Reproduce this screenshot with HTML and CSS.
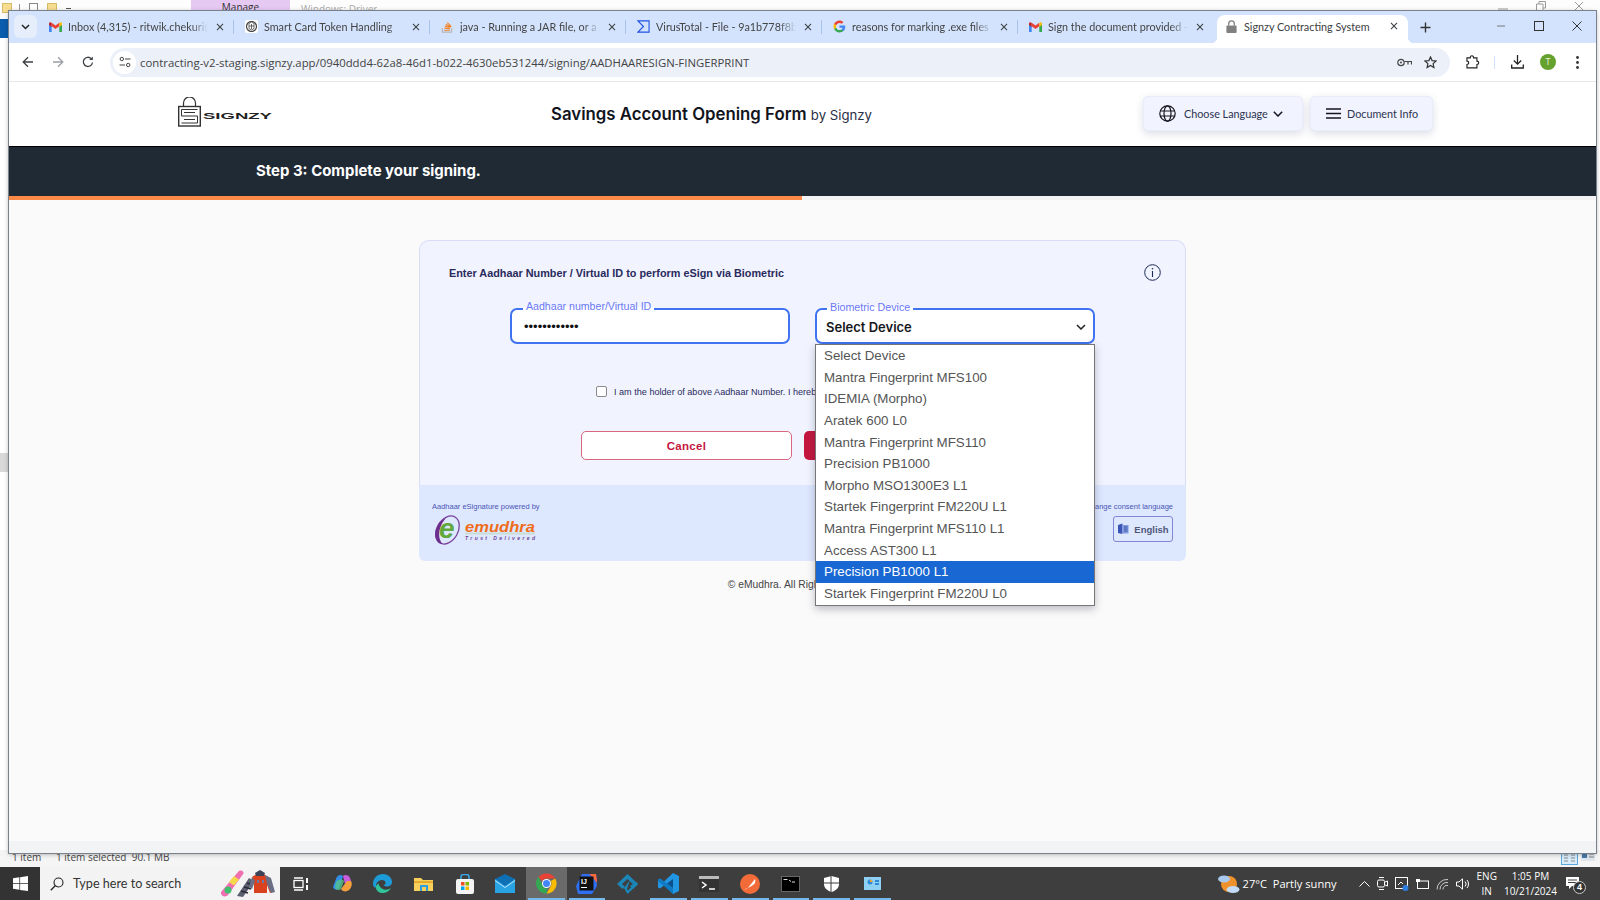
FILE: index.html
```html
<!DOCTYPE html>
<html lang="en">
<head>
<meta charset="utf-8">
<title>Signzy Contracting System</title>
<link rel="stylesheet" href="styles.css">
</head>
<body>
<svg class="defs" width="0" height="0" aria-hidden="true">
  <symbol id="gmail" viewBox="0 0 24 18">
    <path fill="#4285f4" d="M0 18V4l5 3.5V18z"/><path fill="#34a853" d="M24 18V4l-5 3.5V18z"/>
    <path fill="#ea4335" d="M5 7.5 12 12.5l7-5V1l-7 5.2L5 1z"/>
    <path fill="#c5221f" d="M0 3v2.500L5 9V1.500L3.500.5C1.800-.5 0 .8 0 3z"/>
    <path fill="#fbbc04" d="M24 3v2.500L19 9V1.500l1.500-1C22.200-.5 24 .8 24 3z"/>
  </symbol>
  <symbol id="close" viewBox="0 0 10 10"><path d="M1.200 1.200l7.600 7.600M8.800 1.200 1.200 8.800" stroke="#3c4043" stroke-width="1.300" fill="none"/></symbol>
</svg>

<div class="desktop">
  <div class="explorer">
    <div class="ribbon">
      <span class="qa-folder"></span><span class="qa-sep"></span><span class="qa-doc"></span><span class="qa-folder"></span><span class="qa-dash"></span>
      <span class="manage">Manage</span><span class="ribbon-title">Windows: Driver</span>
      <span class="behind-controls">
        <svg width="10" height="10" viewBox="0 0 10 10"><path d="M0 8h10" stroke="#9a9a9a"/></svg>
        <svg width="10" height="10" viewBox="0 0 10 10"><path d="M.5 3h6.500v6.500H.5zM3 3V.5h6.500V7H7" stroke="#9a9a9a" fill="none"/></svg>
        <svg width="10" height="10" viewBox="0 0 10 10"><path d="M1 1l8 8M9 1 1 9" stroke="#9a9a9a"/></svg>
      </span>
    </div>
    <div class="explorer-mid">
      <div class="explorer-blue"></div>
      <div class="explorer-scroll"></div>
    </div>
    <div class="statusbar">
      <span class="st-a">1 item</span><span class="st-b">1 item selected&nbsp; 90.1 MB</span>
      <span class="st-views">
        <svg width="17" height="14" viewBox="0 0 17 14"><rect x=".5" y=".5" width="16" height="13" fill="#d8ecfa" stroke="#5aa9dd"/><path d="M3 4h4M10 4h4M3 7h4M10 7h4M3 10h4M10 10h4" stroke="#8a8a8a"/></svg>
        <svg width="14" height="10" viewBox="0 0 14 10"><rect width="14" height="10" fill="#dfe6ee"/><rect x="1" y="2" width="5" height="5" fill="#4a7aa8"/><path d="M8 3h5M8 6h5" stroke="#888"/></svg>
      </span>
    </div>
  </div>

  <div class="taskbar">
    <div class="start">
      <svg width="15" height="15" viewBox="0 0 16 16"><path fill="#fff" d="M0 2.300 6.800 1.300v6.200H0zM7.600 1.200 16 0v7.500H7.600zM0 8.300h6.800v6.300L0 13.700zM7.600 8.300H16V16l-8.400-1.200z"/></svg>
    </div>
    <div class="search">
      <svg width="14" height="14" viewBox="0 0 14 14"><circle cx="8.500" cy="5.500" r="4.500" fill="none" stroke="#222" stroke-width="1.100"/><path d="M5.200 8.800.8 13.200" stroke="#222" stroke-width="1.300"/></svg>
      <span class="search-text">Type here to search</span>
      <svg class="search-art" width="54" height="29" viewBox="0 0 54 29">
        <path d="M0 23 17 3c2-2.500 6-1.500 5.500 1.500L7 26c-2.500 3-8 1-7-3z" fill="#f06fb0"/>
        <path d="M8 13l5-6 5 3.500-5 6z" fill="#f5d94a"/><circle cx="7" cy="21" r="3.500" fill="#3fbf6f"/>
        <path d="M16 27 28 9l5 3-11 16z" fill="#5a5f70"/><path d="M20 22l7 2M23 18l7 2M26 14l6 2" stroke="#2a2c35" stroke-width="1.500"/>
        <path d="M31 8c3-3 9-4 13-2l5 3 3 14-3 1-3-8v8H33V14z" fill="#d9411f"/><path d="M44 6l6 3 4 14-4 1-4-9zM31 8l-3 10 3 2 3-8z" fill="#6a6f86"/>
        <path d="M34 4l5-3 5 3-1 3h-8z" fill="#3d4258"/><rect x="36" y="11" width="2" height="3" fill="#6d7aa8"/><rect x="41" y="11" width="2" height="3" fill="#6d7aa8"/>
      </svg>
    </div>
    <div class="apps">
      <div class="app"><svg width="16" height="14" viewBox="0 0 16 14"><rect x="1" y="3.500" width="9" height="7" fill="none" stroke="#fff" stroke-width="1.300"/><path d="M1 1h9M1 13h9" stroke="#fff" stroke-width="1.300"/><path d="M13 1h2v5h-2zM13 8h2v5h-2z" fill="#fff"/></svg></div>
      <div class="app"><svg width="21" height="21" viewBox="0 0 21 21"><path d="M4 6c1-4 5-5 7-3l-4 12c-2 3-5 2-6-1z" fill="#2f8fe8"/><path d="M11 3c2-2 6-1 7 2l1 3-6 3z" fill="#c95cdc"/><path d="M19 8c2 3 0 9-4 10-2 1-5 0-6-2l6-8z" fill="#f4a13d"/><path d="M4 9c3-3 6-3 8-1l-3 8c-2 2-6 1-6-2z" fill="#58c38a" opacity=".8"/></svg></div>
      <div class="app"><svg width="21" height="21" viewBox="0 0 21 21"><path d="M1 11C1 5 5.500 1 11 1c5.500 0 9 4 9 8 0 3-2.500 4.500-5 4.500-2 0-3.500-.8-3.500-1.500 3 .5 3-5-1.500-5-3.500 0-6.500 3-6 7.500C2.500 15 1 13 1 11z" fill="#1c9bd8"/><path d="M3.800 14.500c.5 3.500 4 6 7.700 5.500 3-.3 6-2 7.500-5-2 1.500-5 2-7 1.500-3.500-1-5-4-5.500-6-1.500 1-2.700 2-2.700 4z" fill="#2fc49a"/></svg></div>
      <div class="app"><svg width="19" height="16" viewBox="0 0 19 16"><path d="M0 2h7l2 2h10v11H0z" fill="#f8cf5c"/><path d="M0 5h19v2H0z" fill="#e5a92c"/><rect x="6" y="9" width="8" height="6" fill="#2d9fe0"/><rect x="8" y="11" width="4" height="4" fill="#f8cf5c"/></svg></div>
      <div class="app"><svg width="20" height="20" viewBox="0 0 20 20"><path d="M6 5V3c0-1.500 1-2.500 2-2.500h4c1 0 2 1 2 2.500v2" fill="none" stroke="#38a9e6" stroke-width="1.500"/><rect x="1" y="5" width="18" height="15" rx="2" fill="#f4f4f4"/><rect x="6" y="8" width="3.500" height="3.500" fill="#f25022"/><rect x="10.500" y="8" width="3.500" height="3.500" fill="#7fba00"/><rect x="6" y="12.500" width="3.500" height="3.500" fill="#00a4ef"/><rect x="10.500" y="12.500" width="3.500" height="3.500" fill="#ffb900"/></svg></div>
      <div class="app"><svg width="20" height="19" viewBox="0 0 20 19"><rect y="5" width="20" height="14" fill="#29a3e4"/><path d="M0 5 10 0l10 5-10 7z" fill="#0f6fb5"/><path d="M0 6l10 7 10-7v1L10 14 0 7z" fill="#bfe4f7"/></svg></div>
      <div class="app running active"><svg width="21" height="21" viewBox="0 0 21 21"><path d="M10.500.5a10 10 0 0 1 8.700 5H10.500a5 5 0 0 0-4.400 2.500L2.500 4A10 10 0 0 1 10.500.5z" fill="#ea4335"/><path d="M19.200 5.500a10 10 0 0 1-8.700 15l4.300-7.500a5 5 0 0 0 0-5z" fill="#fbbc04"/><path d="M10.500 20.500A10 10 0 0 1 2.500 4L6.800 13a5 5 0 0 0 4.300 2.500z" fill="#34a853"/><circle cx="10.500" cy="10.500" r="4.500" fill="#fff"/><circle cx="10.500" cy="10.500" r="3.500" fill="#4285f4"/></svg></div>
      <div class="app running"><svg width="21" height="21" viewBox="0 0 21 21"><path d="M0 13 6 1h14l1 12-5 8H2z" fill="#2f6ff0"/><path d="M6 1h14l1 8-8-8z" fill="#e23c8c"/><path d="M14 1h6l1 9z" fill="#f36b3b"/><rect x="3.500" y="3.500" width="14" height="14" fill="#111"/><text x="5" y="10.500" class="ij">IJ</text><rect x="5" y="14" width="6" height="1" fill="#fff"/></svg></div>
      <div class="app"><svg width="21" height="20" viewBox="0 0 21 20"><path d="M10.500 0 21 10 16 15l-3-3 3-2-5.500-5L5 10l3 3-2.500 2L0 10z" fill="#1b86b8"/><path d="M13 6l-6 8 3.500 6L21 10l-2-2-8 8.500-1-1.500z" fill="#1b86b8"/></svg></div>
      <div class="app running"><svg width="21" height="21" viewBox="0 0 21 21"><path d="M15 0 21 3v15l-6 3L6 12.500 2 15.500 0 14.500V6.500l2-1 4 3z" fill="#2196e3"/><path d="M15 6v9l-6-4.500z" fill="#0d4f8b"/><path d="M0 6.500 2 5.500 15 15v6L0 8z" fill="#0a6fb8" opacity=".75"/></svg></div>
      <div class="app running"><svg width="20" height="16" viewBox="0 0 20 16"><rect width="20" height="16" fill="#333"/><rect width="20" height="3" fill="#bbb"/><path d="M3 6l4 3-4 3" fill="none" stroke="#fff" stroke-width="1.500"/><path d="M10 13h6" stroke="#fff" stroke-width="1.500"/></svg></div>
      <div class="app running"><svg width="20" height="20" viewBox="0 0 20 20"><circle cx="10" cy="10" r="10" fill="#f26b38"/><path d="M4 16c3-1 5-3 7-6l4-5c1 2 0 5-2 6l-3 2-3 1z" fill="#fff"/></svg></div>
      <div class="app running"><svg width="19" height="16" viewBox="0 0 19 16"><rect x=".5" y=".5" width="18" height="15" fill="#000" stroke="#666"/><path d="M2.500 3.500h4M8 4l2 1.500M11 6h3" stroke="#ddd"/></svg></div>
      <div class="app running"><svg width="15" height="16" viewBox="0 0 15 16"><path d="M7.500 0 15 2v6c0 4-3 6.500-7.500 8C3 14.500 0 12 0 8V2z" fill="#fff"/><path d="M7 0v16M0 7h15" stroke="#3c3c3c" stroke-width="1"/></svg></div>
      <div class="app running"><svg width="17" height="13" viewBox="0 0 17 13"><rect width="17" height="13" fill="#8fd0f5"/><circle cx="6" cy="5" r="2.500" fill="#2f8ad8"/><path d="M6 2.500A2.500 2.500 0 0 1 8.500 5H6z" fill="#f3a73a"/><path d="M11 3h4v2h-4zM11 6h4v2h-4z" fill="#2f8ad8"/></svg></div>
    </div>
    <div class="tray">
      <svg class="weather" width="22" height="20" viewBox="0 0 22 20"><circle cx="11" cy="10" r="8" fill="#f0922b"/><ellipse cx="6" cy="5" rx="6" ry="3.500" fill="#a9c8ee"/><ellipse cx="15" cy="15.500" rx="6.500" ry="3.500" fill="#c4daf5"/></svg>
      <span class="temp">27°C&nbsp; Partly sunny</span>
      <span class="tray-icons">
        <svg width="11" height="7" viewBox="0 0 11 7"><path d="M.5 6.500l5-5 5 5" fill="none" stroke="#fff"/></svg>
        <svg width="11" height="15" viewBox="0 0 11 15"><rect x=".5" y="4" width="7" height="7" rx="1.500" fill="none" stroke="#fff"/><path d="M8 6l2.500-1v5L8 9M2 1.500h5M2 13.500h5" stroke="#fff" fill="none"/></svg>
        <svg width="14" height="14" viewBox="0 0 14 14"><rect x=".5" y=".5" width="12" height="11" fill="none" stroke="#fff"/><path d="M3 8l3-3 2 2" stroke="#fff" fill="none"/><circle cx="10.500" cy="11" r="3" fill="#2f7fe0"/></svg>
        <svg width="13" height="10" viewBox="0 0 13 10"><rect x="1.500" y="2" width="11" height="7.500" fill="none" stroke="#fff"/><rect y="0" width="4" height="3" fill="#fff"/></svg>
        <svg width="13" height="12" viewBox="0 0 13 12"><path d="M1 11.500a10 10 0 0 1 11-10M4 11.500a7 7 0 0 1 8-7M7 11.500a4 4 0 0 1 5-4" fill="none" stroke="#ccc"/></svg>
        <svg width="14" height="12" viewBox="0 0 14 12"><path d="M.5 4h2.500L6.500.8v10.400L3 8H.5z" fill="none" stroke="#fff"/><path d="M9 3.500a3.500 3.500 0 0 1 0 5M11 2a6 6 0 0 1 0 8" fill="none" stroke="#fff"/></svg>
      </span>
      <span class="lang"><span>ENG</span><span>IN</span></span>
      <span class="clock"><span>1:05 PM</span><span>10/21/2024</span></span>
      <span class="notif">
        <svg width="13" height="13" viewBox="0 0 13 13"><path d="M0 0h13v9H6l-3 3V9H0z" fill="#fff"/><path d="M2 3h9M2 5.500h9" stroke="#3d3d3d"/></svg>
        <span class="notif-badge">4</span>
      </span>
    </div>
  </div>
</div>

<div class="window">
  <div class="tabstrip">
    <button class="tab-list"><svg width="9" height="6" viewBox="0 0 9 6"><path d="M1 1l3.500 3.500L8 1" fill="none" stroke="#222" stroke-width="1.500"/></svg></button>
    <div class="tab sep"><svg class="fav fav-gm"><use href="#gmail"/></svg><span class="tab-title">Inbox (4,315) - ritwik.chekuri@signzy.tech</span><svg class="tab-x"><use href="#close"/></svg></div>
    <div class="tab sep"><span class="fav fav-ai"><svg width="11" height="11" viewBox="0 0 11 11"><circle cx="5.500" cy="5.500" r="5" fill="none" stroke="#444" stroke-width="1.200"/><path d="M3 2.500v5l2.500 1.500L8 7.500v-5L5.500 1zM3 5h5M5.500 3v5" fill="none" stroke="#444" stroke-width=".8"/></svg></span><span class="tab-title">Smart Card Token Handling</span><svg class="tab-x"><use href="#close"/></svg></div>
    <div class="tab sep"><svg class="fav" viewBox="0 0 14 14"><path d="M1.500 8.500v4.500h10V8.500" fill="none" stroke="#b6b6b6" stroke-width="1.200"/><path d="M3.500 11h6M3.700 8.800l6 .6M4.200 6.600l5.800 1.500M5.200 4.600l5.200 3M6.800 2.800l4.300 4.300" stroke="#f48024" stroke-width="1.200"/></svg><span class="tab-title">java - Running a JAR file, or a JAR file on the system</span><svg class="tab-x"><use href="#close"/></svg></div>
    <div class="tab sep"><svg class="fav" viewBox="0 0 14 14"><path d="M1 1h12v12H1l6-6z" fill="none" stroke="#2050e0" stroke-width="1.200"/></svg><span class="tab-title">VirusTotal - File - 9a1b778f8b0c3d2e1f</span><svg class="tab-x"><use href="#close"/></svg></div>
    <div class="tab sep"><svg class="fav" viewBox="0 0 24 24"><path fill="#4285f4" d="M22.560 12.250c0-.78-.07-1.530-.2-2.250H12v4.260h5.920c-.26 1.370-1.040 2.530-2.210 3.310v2.770h3.570c2.080-1.920 3.280-4.740 3.280-8.090z"/><path fill="#34a853" d="M12 23c2.970 0 5.460-.98 7.280-2.660l-3.570-2.770c-.98.66-2.230 1.060-3.710 1.060-2.860 0-5.290-1.930-6.160-4.530H2.180v2.840C3.990 20.530 7.700 23 12 23z"/><path fill="#fbbc05" d="M5.840 14.090c-.22-.66-.35-1.360-.35-2.090s.13-1.430.35-2.090V7.070H2.180C1.430 8.550 1 10.220 1 12s.43 3.450 1.180 4.930l3.660-2.840z"/><path fill="#ea4335" d="M12 5.380c1.620 0 3.060.56 4.210 1.640l3.150-3.150C17.450 2.090 14.970 1 12 1 7.700 1 3.990 3.470 2.180 7.070l3.660 2.840c.87-2.600 3.300-4.530 6.160-4.530z"/></svg><span class="tab-title">reasons for marking .exe files as unsafe</span><svg class="tab-x"><use href="#close"/></svg></div>
    <div class="tab"><svg class="fav fav-gm"><use href="#gmail"/></svg><span class="tab-title">Sign the document provided - the signer</span><svg class="tab-x"><use href="#close"/></svg></div>
    <div class="tab tab-active"><svg class="fav" viewBox="0 0 14 14"><path d="M4 6V4a3 3 0 0 1 6 0v2" fill="none" stroke="#808080" stroke-width="1.400"/><rect x="1.500" y="6" width="11" height="8" rx="1" fill="#808080"/></svg><span class="tab-title tab-title-full">Signzy Contracting System</span><svg class="tab-x"><use href="#close"/></svg></div>
    <button class="tab-new"><svg width="11" height="11" viewBox="0 0 11 11"><path d="M5.500.5v10M.5 5.500h10" stroke="#333" stroke-width="1.400"/></svg></button>
    <div class="win-controls">
      <svg width="10" height="10" viewBox="0 0 10 10"><path d="M1 5h8" stroke="#777"/></svg>
      <svg width="10" height="10" viewBox="0 0 10 10"><rect x=".5" y=".5" width="9" height="9" fill="none" stroke="#333"/></svg>
      <svg width="10" height="10" viewBox="0 0 10 10"><path d="M.5.5l9 9M9.500.5l-9 9" stroke="#333"/></svg>
    </div>
  </div>

  <div class="toolbar">
    <button class="nav"><svg width="12" height="12" viewBox="0 0 12 12"><path d="M11 6H1.500M6 1.200 1.200 6 6 10.800" fill="none" stroke="#3c4043" stroke-width="1.300"/></svg></button>
    <button class="nav"><svg width="12" height="12" viewBox="0 0 12 12"><path d="M1 6h9.500M6 1.200 10.800 6 6 10.800" fill="none" stroke="#9aa0a6" stroke-width="1.300"/></svg></button>
    <button class="nav"><svg width="12" height="12" viewBox="0 0 12 12"><path d="M10.500 6.500A4.600 4.600 0 1 1 9.200 2.600" fill="none" stroke="#3c4043" stroke-width="1.300"/><path d="M10.800.5v3.600H7.200z" fill="#3c4043"/></svg></button>
    <div class="omnibox">
      <span class="site-icon"><svg width="12" height="12" viewBox="0 0 12 12"><circle cx="2.800" cy="3" r="1.700" fill="none" stroke="#444"/><path d="M6 3h5.500M.5 9H6" stroke="#444"/><circle cx="9.200" cy="9" r="1.700" fill="none" stroke="#444"/></svg></span>
      <span class="url">contracting-v2-staging.signzy.app/0940ddd4-62a8-46d1-b022-4630eb531244/signing/AADHAARESIGN-FINGERPRINT</span>
      <svg class="omni-key" width="15" height="9" viewBox="0 0 15 9"><circle cx="4" cy="4.500" r="3.200" fill="none" stroke="#444" stroke-width="1.200"/><circle cx="4" cy="4.500" r="1" fill="#444"/><path d="M7.500 3.500H14.500V6.500M11 4v2.500" fill="none" stroke="#444" stroke-width="1.200"/></svg>
      <svg class="omni-star" width="13" height="13" viewBox="0 0 13 13"><path d="M6.500 1l1.600 3.600 3.900.4-2.900 2.600.8 3.900-3.400-2-3.400 2 .8-3.900L1 5l3.900-.4z" fill="none" stroke="#333" stroke-width="1.200"/></svg>
    </div>
    <svg class="tool-puzzle" width="14" height="14" viewBox="0 0 14 14"><path d="M1 3h3.500c0-3 3.500-3 3.500 0h3.500v3.500c2.500 0 2.500 3.500 0 3.500V13.500H1V10c2.500 0 2.500-3.500 0-3.500z" fill="none" stroke="#222" stroke-width="1.200" transform="scale(.95)"/></svg>
    <span class="tool-sep"></span>
    <svg class="tool-dl" width="13" height="14" viewBox="0 0 13 14"><path d="M6.500 0v9M2.800 5.500l3.700 3.700 3.700-3.700M.7 9.500v3.500h11.600V9.500" fill="none" stroke="#222" stroke-width="1.300"/></svg>
    <span class="avatar">T</span>
    <svg class="tool-dots" width="3" height="13" viewBox="0 0 3 13"><circle cx="1.500" cy="1.500" r="1.400" fill="#333"/><circle cx="1.500" cy="6.500" r="1.400" fill="#333"/><circle cx="1.500" cy="11.500" r="1.400" fill="#333"/></svg>
  </div>

  <div class="page">
    <header class="header">
      <svg class="logo" width="94" height="30" viewBox="0 0 94 30">
        <path d="M5.500 9V6a6 6 0 0 1 12 0v3" fill="none" stroke="#333" stroke-width="1.200"/>
        <rect x=".7" y="9.500" width="21.600" height="19.500" fill="none" stroke="#333" stroke-width="1.400"/>
        <path d="M19.500 12.500H3.500v6.500h16v7H3.500M6 15.500h11M6 22.500h11" fill="none" stroke="#333" stroke-width="1"/>
        <text x="25" y="22" class="logo-text" textLength="69" lengthAdjust="spacingAndGlyphs">SIGNZY</text>
      </svg>
      <h1 class="doc-title">Savings Account Opening Form <span class="doc-by">by Signzy</span></h1>
      <div class="header-actions">
        <button class="hbtn hbtn-lang">
          <svg width="17" height="17" viewBox="0 0 17 17"><g fill="none" stroke="#14141e" stroke-width="1.200"><circle cx="8.500" cy="8.500" r="7.700"/><ellipse cx="8.500" cy="8.500" rx="3.500" ry="7.700"/><path d="M1.200 6h14.600M1.200 11h14.600"/></g></svg>
          <span>Choose Language</span>
          <svg class="hbtn-caret" width="10" height="6" viewBox="0 0 10 6"><path d="M.8.800 5 5 9.200.8" fill="none" stroke="#14141e" stroke-width="1.500"/></svg>
        </button>
        <button class="hbtn hbtn-doc">
          <svg width="15" height="11" viewBox="0 0 15 11"><path d="M0 1h15M0 5.500h15M0 10h15" stroke="#14141e" stroke-width="1.300"/></svg>
          <span>Document Info</span>
        </button>
      </div>
    </header>
    <div class="stepbar"><span>Step 3: Complete your signing.</span></div>
    <div class="progress"><div class="progress-fill"></div></div>

    <main class="content">
      <section class="card">
        <div class="card-body">
          <div class="card-head">
            <h2 class="card-title">Enter Aadhaar Number / Virtual ID to perform eSign via Biometric</h2>
            <svg width="17" height="17" viewBox="0 0 17 17"><circle cx="8.500" cy="8.500" r="7.800" fill="none" stroke="#1b2a55"/><path d="M8.500 7v6" stroke="#1b2a55" stroke-width="1.100"/><circle cx="8.500" cy="4.800" r=".8" fill="#1b2a55"/></svg>
          </div>
          <div class="fields">
            <div class="field">
              <label class="field-label">Aadhaar number/Virtual ID</label>
              <span class="dots">••••••••••••</span>
            </div>
            <div class="field field-select">
              <label class="field-label field-label-b">Biometric Device</label>
              <span class="select-val">Select Device</span>
              <svg width="10" height="6" viewBox="0 0 10 6"><path d="M1 1l4 4 4-4" fill="none" stroke="#222" stroke-width="1.500"/></svg>
              <ul class="options">
                <li>Select Device</li>
                <li>Mantra Fingerprint MFS100</li>
                <li>IDEMIA (Morpho)</li>
                <li>Aratek 600 L0</li>
                <li>Mantra Fingerprint MFS110</li>
                <li>Precision PB1000</li>
                <li>Morpho MSO1300E3 L1</li>
                <li>Startek Fingerprint FM220U L1</li>
                <li>Mantra Fingerprint MFS110 L1</li>
                <li>Access AST300 L1</li>
                <li class="selected">Precision PB1000 L1</li>
                <li>Startek Fingerprint FM220U L0</li>
              </ul>
            </div>
          </div>
          <div class="consent">
            <span class="check"></span>
            <span class="consent-text">I am the holder of above Aadhaar Number. I hereby give my consent to eMudhra to</span>
          </div>
          <div class="actions">
            <button class="btn btn-cancel">Cancel</button>
            <button class="btn btn-submit">Submit</button>
          </div>
        </div>
        <div class="card-foot">
          <div class="foot-left">
            <span class="foot-note">Aadhaar eSignature powered by</span>
            <svg class="emudhra" width="106" height="32" viewBox="0 0 106 32">
              <ellipse cx="14.500" cy="16" rx="10.500" ry="15" transform="rotate(30 14.500 16)" fill="none" stroke="#7b3f9a" stroke-width="1.300"/>
              <path d="M13 4C5 7 0 17 3 25c1 3 4 5 7 5C5 26 4 14 13 4z" fill="#6d2f8f"/>
              <text x="6" y="24" class="em-e">e</text>
              <text x="32" y="18" class="em-name" textLength="70" lengthAdjust="spacingAndGlyphs">emudhra</text>
              <rect x="32" y="18.500" width="70" height="2" fill="#c9dcd6"/>
              <text x="32" y="26" class="em-tag" textLength="70">Trust Delivered</text>
            </svg>
          </div>
          <div class="foot-right">
            <span class="foot-note">Change consent language</span>
            <button class="lang-btn">
              <svg width="12" height="12" viewBox="0 0 12 12"><path d="M1 2l4.500-1.500V11L1 10z" fill="#3a55b5"/><path d="M6 2h5.500v8.500H6z" fill="#7f9ae0"/><path d="M7 4h3.500M7 6h3.500M7 8h3.500" stroke="#20368a" stroke-width=".7"/></svg>
              <span>English</span>
            </button>
          </div>
        </div>
      </section>
      <p class="copyright">© eMudhra. All Rights Reserved.</p>
    </main>
    <div class="page-bottom"></div>
  </div>
</div>
</body>
</html>
```

FILE: styles.css
```css
* { box-sizing: border-box; }
html, body { margin: 0; padding: 0; height: 100%; overflow: hidden; }
body { position: relative; font-family: "Liberation Sans", Arial, sans-serif; background: #fff; }
button { font: inherit; border: 0; background: none; padding: 0; margin: 0; }
ul, h1, h2, p { margin: 0; padding: 0; }
.defs { position: absolute; }

/* desktop behind the browser window */
.desktop { height: 900px; display: flex; flex-direction: column; }
.explorer { flex: 1; display: flex; flex-direction: column; background: #fff; min-height: 0; }
.ribbon { height: 19px; display: flex; align-items: flex-start; background: #fdfdfd; padding-left: 2px; font: 10px "Open Sans", sans-serif; color: #333; }
.qa-folder { width: 10px; height: 10px; background: #f7dd8f; border: 1px solid #d6bb68; margin-top: 3px; }
.qa-sep { width: 1px; height: 8px; background: #999; margin: 4px 9px 0 7px; }
.qa-doc { width: 9px; height: 9px; background: #fff; border: 1px solid #888; margin: 3px 9px 0 0; }
.qa-dash { width: 5px; height: 1px; background: #555; margin: 8px 0 0 9px; }
.manage { margin-left: 120px; width: 99px; height: 11px; text-align: center; background: #e6c9f3; line-height: 15px; overflow: hidden; }
.ribbon-title { margin-left: 11px; color: #aaa; line-height: 19px; height: 11px; overflow: hidden; }
.behind-controls { margin-left: auto; margin-right: 16px; margin-top: 1px; display: flex; gap: 28px; }
.explorer-mid { flex: 1; display: flex; flex-direction: column; }
.explorer-blue { width: 9px; height: 19px; background: #0a5cad; }
.explorer-scroll { width: 9px; height: 19px; margin-top: 415px; background: #d9d9d9; }
.statusbar { height: 17px; display: flex; align-items: flex-start; font: 10px/14px "Open Sans", sans-serif; color: #444; background: #f5f5f5; }
.st-a { margin-left: 12px; width: 44px; }
.st-views { margin-left: auto; margin-right: 5px; display: flex; gap: 3px; align-items: flex-start; padding-top: 1px; }

/* taskbar */
.taskbar { height: 33px; flex: none; background: #3e3e3e; display: flex; color: #fff; }
.start { width: 40px; display: flex; align-items: center; justify-content: center; background: #333; }
.search { width: 240px; background: #f3f3f3; display: flex; align-items: center; padding-left: 10px; color: #333; font: 12.600px Lato, sans-serif; }
.search-text { margin-left: 9px; }
.search-art { margin-left: auto; margin-right: 5px; }
.apps { display: flex; margin-left: 1px; }
.app { width: 40.8px; display: flex; align-items: center; justify-content: center; position: relative; }
.app.running::after { content: ""; position: absolute; left: 2px; right: 2px; bottom: 0; height: 2px; background: #76b9ed; }
.app.active { background: #6a6a6a; }
.ij { font: bold 7px "Liberation Sans", sans-serif; fill: #fff; }
.tray { margin-left: auto; display: flex; align-items: center; font: 11px/14px "Open Sans", sans-serif; }
.weather { margin-right: 3px; }
.temp { font-size: 11.100px; white-space: nowrap; }
.tray-icons { display: flex; align-items: center; gap: 7px; margin-left: 22px; }
.lang, .clock { display: flex; flex-direction: column; align-items: center; font-size: 10px; line-height: 15px; }
.lang { margin-left: 7px; }
.clock { margin-left: 7px; }
.notif { position: relative; width: 22px; height: 22px; margin: 0 12px 0 9px; }
.notif svg { position: absolute; left: 0; top: 4px; }
.notif-badge { position: absolute; left: 7px; top: 8px; width: 13px; height: 13px; border-radius: 50%; background: #333; border: 1px solid #ccc; font: bold 9px/11px "Liberation Sans", sans-serif; text-align: center; }

/* browser window */
.window { position: absolute; left: 9px; top: 11px; width: 1587px; height: 842px; display: flex; flex-direction: column; background: #fff; box-shadow: 0 0 0 1px #7b818b, 0 1px 5px rgba(0,0,0,.35); }
.tabstrip { height: 32px; background: #d3e3fd; display: flex; align-items: flex-start; font: 10.800px Lato, sans-serif; color: #444; flex: none; }
.tab-list { width: 23px; height: 23px; margin: 4px 1px 0 5px; background: #e6eefc; border-radius: 6px; display: flex; align-items: center; justify-content: center; }
.tab { width: 196px; height: 32px; padding: 0 7px 1px 11px; display: flex; align-items: center; position: relative; }
.tab.sep::after { content: ""; position: absolute; right: 0; top: 9px; height: 14px; width: 1px; background: #a9c4ea; }
.fav { width: 13px; height: 13px; flex: none; margin-right: 6px; }
.fav-gm { height: 10px; }
.fav-ai { display: flex; align-items: center; justify-content: center; background: #fff; border-radius: 2px; }
.tab-title { flex: 1; white-space: nowrap; overflow: hidden; -webkit-mask-image: linear-gradient(to right, #000 88%, transparent); mask-image: linear-gradient(to right, #000 88%, transparent); }
.tab-title-full { -webkit-mask-image: none; mask-image: none; }
.tab-x { width: 8px; height: 8px; flex: none; margin-left: 8px; margin-right: 3px; }
.tab-active { width: 191px; margin-left: 3px; margin-top: 4px; height: 28px; background: #fff; border-radius: 8px 8px 0 0; padding: 0 7px 6px 8px; color: #3c4043; }
.tab-active::before, .tab-active::after { content: ""; position: absolute; bottom: 0; width: 6px; height: 6px; }
.tab-active::before { left: -6px; background: radial-gradient(circle at 0 0, transparent 6px, #fff 6.500px); }
.tab-active::after { right: -6px; background: radial-gradient(circle at 100% 0, transparent 6px, #fff 6.500px); }
.tab-new { width: 14px; height: 32px; margin-left: 10px; display: flex; align-items: center; justify-content: center; }
.win-controls { margin-left: auto; height: 30px; display: flex; align-items: center; gap: 28px; padding-right: 14px; }

.toolbar { height: 39px; flex: none; display: flex; align-items: center; background: #fff; padding: 4px 0 4px 4px; border-bottom: 1px solid #e8e8e8; }
.nav { width: 30px; height: 29px; display: flex; align-items: center; justify-content: center; }
.omnibox { width: 1340px; height: 29px; margin-left: 7px; background: #ebf0f9; border-radius: 15px; display: flex; align-items: center; padding-left: 3px; font: 11.350px "Open Sans", sans-serif; color: #444; }
.site-icon { width: 23px; height: 23px; border-radius: 50%; background: #fff; display: flex; align-items: center; justify-content: center; }
.url { margin-left: 4px; white-space: nowrap; }
.omni-key { margin-left: auto; margin-right: -1px; }
.omni-star { margin: 0 13px 0 13px; }
.tool-puzzle { margin-left: 16px; }
.tool-sep { width: 1px; height: 13px; background: #d3e3fd; margin-left: 14px; }
.tool-dl { margin-left: 16px; }
.avatar { width: 16px; height: 16px; margin-left: 16px; border-radius: 50%; background: #64a12d; color: #e8f3d9; font: 9px/16px "Open Sans", sans-serif; text-align: center; }
.tool-dots { margin-left: 20px; }

/* page */
.page { flex: 1; display: flex; flex-direction: column; background: #fafafa; min-height: 0; font-family: Inter, sans-serif; }
.header { height: 64px; flex: none; background: #fff; display: flex; align-items: center; justify-content: space-between; padding: 0 163px 1px 169px; }
.logo { margin-top: -4px; }
.logo-text { font: bold 9px "Liberation Sans", sans-serif; fill: #222; }
.doc-title { font: 600 16.800px Inter, sans-serif; color: #11141c; white-space: nowrap; margin-left: 8px; }
.doc-by { font-weight: 400; font-size: 13.200px; color: #2b2f45; }
.header-actions { display: flex; gap: 7px; }
.hbtn { height: 35px; display: flex; align-items: center; background: #f1f4fe; border: 1px solid #e8ecfb; border-radius: 5px; box-shadow: 0 3px 8px rgba(60,70,110,.18); font: 10.800px Lato, sans-serif; color: #2b3350; white-space: nowrap; }
.hbtn-lang { width: 160px; padding-left: 15px; gap: 8px; }
.hbtn-caret { margin-left: -3px; }
.hbtn-doc { width: 123px; padding-left: 15px; gap: 6px; }
.stepbar { height: 50px; flex: none; background: #202a35; border-top: 1px solid #000; display: flex; align-items: center; padding: 0 0 1px 247px; color: #fff; font: 700 14.950px Inter, sans-serif; }
.progress { height: 4px; flex: none; background: #f3f3f3; }
.progress-fill { width: 793px; height: 100%; background: #ff8a48; }
.content { flex: 1; display: flex; flex-direction: column; align-items: center; padding-top: 40px; min-height: 0; }
.card { width: 767px; flex: none; border-radius: 10px; background: #f1f4ff; border: 1px solid #d9dcf6; border-bottom: 0; }
.card-body { height: 244px; padding: 23px 24px 0 29px; }
.card-head { display: flex; justify-content: space-between; align-items: center; height: 17px; }
.card-title { font: bold 10.850px "Liberation Sans", sans-serif; color: #2a2b5c; }
.fields { display: flex; justify-content: center; gap: 25px; margin: 27px 0 0 -5px; }
.field { width: 280px; height: 36px; position: relative; display: flex; align-items: center; justify-content: space-between; padding: 1px 10px 0 12px; background: #fff; border: 2px solid #3f73f2; border-radius: 7px; }
.field-select { padding: 1px 7px 0 9px; }
.field-label { position: absolute; left: 11px; top: -9px; padding: 0 3px; height: 11px; font: 10.600px/11px "Liberation Sans", sans-serif; color: #6b78f5; background: linear-gradient(to bottom, #f1f4ff 50%, #fff 50%); white-space: nowrap; }
.field-label-b { left: 10px; top: -8px; font-size: 10.700px; }
.dots { font: 13px "Liberation Sans", sans-serif; color: #111; }
.select-val { font: 600 13px Inter, sans-serif; color: #15171c; }
.options { position: absolute; left: -2px; top: 34px; width: 280px; list-style: none; background: #fff; border: 1px solid #767676; box-shadow: 0 3px 8px rgba(40,40,70,.3); font: 13.330px/21.650px "Liberation Sans", sans-serif; color: #555; z-index: 2; }
.options li { height: 21.650px; padding-left: 8px; white-space: nowrap; }
.options .selected { background: #1967d2; color: #fff; }
.consent { display: flex; align-items: center; margin: 42px 0 0 147px; white-space: nowrap; font: 9.100px "Liberation Sans", sans-serif; color: #2a2b5c; }
.check { width: 11px; height: 11px; flex: none; border: 1px solid #8a8a8a; border-radius: 2px; background: #fff; margin-right: 7px; }
.actions { display: flex; gap: 12px; margin: 34px 0 0 132px; }
.btn { width: 211px; height: 29px; border-radius: 5px; font: bold 11.500px "Liberation Sans", sans-serif; letter-spacing: .3px; }
.btn-cancel { background: #fff; color: #c4173f; border: 1px solid #d9677f; }
.btn-submit { background: #c4173f; color: #fff; }
.card-foot { height: 76px; display: flex; justify-content: space-between; background: #dde8ff; border-radius: 0 0 6px 6px; padding: 17px 13px 0 13px; margin: 0 -1px; }
.foot-note { display: block; font: 7.500px "Liberation Sans", sans-serif; color: #4a55b5; white-space: nowrap; }
.foot-left { display: flex; flex-direction: column; gap: 3px; }
.emudhra { margin-left: 1px; }
.em-e { font: italic bold 28px "Liberation Sans", sans-serif; fill: #62a83e; }
.em-name { font: italic bold 15px "Liberation Sans", sans-serif; fill: #ef6c1a; }
.em-tag { font: italic bold 5px "Liberation Sans", sans-serif; fill: #6b3f96; }
.foot-right { display: flex; flex-direction: column; align-items: flex-end; gap: 5px; }
.lang-btn { width: 60px; height: 26px; display: flex; align-items: center; justify-content: center; gap: 5px; border: 1px solid #8087d9; border-radius: 3px; font: bold 9.500px "Liberation Sans", sans-serif; color: #51577a; }
.copyright { margin-top: 18px; font: 10.300px "Liberation Sans", sans-serif; color: #444; }
.page-bottom { height: 12px; flex: none; background: #f1f3f5; }
```
